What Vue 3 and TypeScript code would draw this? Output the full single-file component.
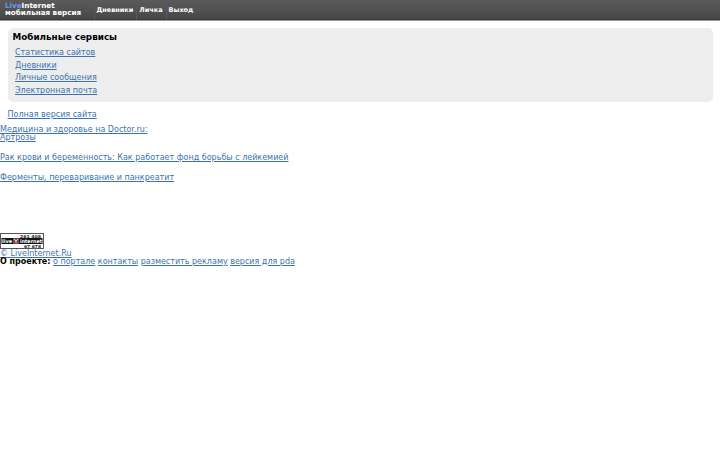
<script setup lang="ts">
interface Link {
  title: string
  href: string
}

const menu: Link[] = [
  { title: 'Дневники', href: '#diary' },
  { title: 'Личка', href: '#pm' },
  { title: 'Выход', href: '#logout' },
]

const services: Link[] = [
  { title: 'Статистика сайтов', href: '#stat' },
  { title: 'Дневники', href: '#diary' },
  { title: 'Личные сообщения', href: '#pm' },
  { title: 'Электронная почта', href: '#mail' },
]

const about: Link[] = [
  { title: 'о портале', href: '#about' },
  { title: 'контакты', href: '#contacts' },
  { title: 'разместить рекламу', href: '#adv' },
  { title: 'версия для pda', href: '#pda' },
]
</script>

<template>
  <div class="page">
    <header class="header">
      <div class="logo">
        <div><span class="logo-live">Live</span>Internet</div>
        <div>мобильная версия</div>
      </div>
      <nav class="menu">
        <a v-for="item in menu" :key="item.href" :href="item.href">{{ item.title }}</a>
      </nav>
    </header>

    <section class="services">
      <h1>Мобильные сервисы</h1>
      <ul>
        <li v-for="item in services" :key="item.href">
          <a :href="item.href">{{ item.title }}</a>
        </li>
      </ul>
    </section>

    <div class="full-version"><a href="#full">Полная версия сайта</a></div>

    <div class="news">
      <p><a href="#doctor">Медицина и здоровье на Doctor.ru:<br />Артрозы</a></p>
      <p><a href="#fund">Рак крови и беременность: Как работает фонд борьбы с лейкемией</a></p>
      <p><a href="#enzymes">Ферменты, переваривание и панкреатит</a></p>
    </div>

    <footer class="footer">
      <svg class="counter" width="44" height="16" viewBox="0 0 44 16">
        <rect x="0.5" y="0.5" width="43" height="15" fill="#fff" stroke="#555" />
        <rect x="1.5" y="5" width="41" height="6" fill="#151515" />
        <rect x="13" y="5" width="6" height="6" fill="#74465f" />
        <path d="M14 6l2 2 2-2M16 8v2" fill="none" stroke="#f3d36b" />
        <text class="counter-num" x="20" y="4.6" textLength="21" lengthAdjust="spacingAndGlyphs">261 408</text>
        <text class="counter-name" x="2" y="10" textLength="10" lengthAdjust="spacingAndGlyphs">live</text>
        <text class="counter-name" x="20" y="10" textLength="22" lengthAdjust="spacingAndGlyphs">internet</text>
        <text class="counter-num" x="24" y="14.6" textLength="17" lengthAdjust="spacingAndGlyphs">67 678</text>
      </svg>
      <div><a href="#liru">© LiveInternet.Ru</a></div>
      <div class="about">
        <b>О проекте:</b>
        <template v-for="item in about" :key="item.href">
          {{ ' ' }}<a :href="item.href">{{ item.title }}</a>
        </template>
      </div>
    </footer>
  </div>
</template>

<style>
body {
  background: #fff;
}
</style>

<style scoped>
.page {
  font-family: 'DejaVu Sans', sans-serif;
  font-size: 8px;
  line-height: 8px;
  color: #000;
}

a {
  color: #3b73af;
  text-decoration: underline;
}

.header {
  display: flex;
  box-sizing: border-box;
  height: 21px;
  border-bottom: 1px solid #999;
  background: linear-gradient(#5a5a5a, #505050 60%, #444 95%, #333);
  color: #fff;
  font-weight: bold;
}

.logo {
  width: 89px;
  padding: 2px 0 0 5px;
  font-size: 7.2px;
  line-height: 7px;
}

.logo-live {
  color: #6a9be0;
}

.menu {
  display: flex;
  height: 20px;
  line-height: 20px;
  font-size: 6.5px;
}

.menu a {
  padding: 0 3px 0 1.5px;
  color: #fff;
  text-decoration: none;
  border-left: 1px solid #575757;
}

.menu a + a {
  padding-left: 2px;
}

.services {
  box-sizing: border-box;
  height: 74px;
  margin: 7px 7.5px 0;
  padding: 4px 5px;
  border-radius: 5px;
  background: #ededed;
}

.services h1 {
  margin: 0;
  font-size: 8.8px;
  line-height: 11px;
}

.services ul {
  margin: 3.8px 0 0;
  padding: 0 0 0 2.5px;
  list-style: none;
}

.services li {
  line-height: 12.8px;
}

.full-version {
  padding: 8.5px 7.5px 0;
}

.news {
  padding-top: 7.5px;
}

.news p {
  margin: 0 0 12px;
}

.footer {
  padding-top: 39px;
}

.counter {
  display: block;
  margin-bottom: 0.5px;
}

.counter-num {
  font-size: 4px;
  font-weight: bold;
  fill: #222;
}

.counter-name {
  font-size: 5px;
  font-weight: bold;
  fill: #fff;
}
</style>
